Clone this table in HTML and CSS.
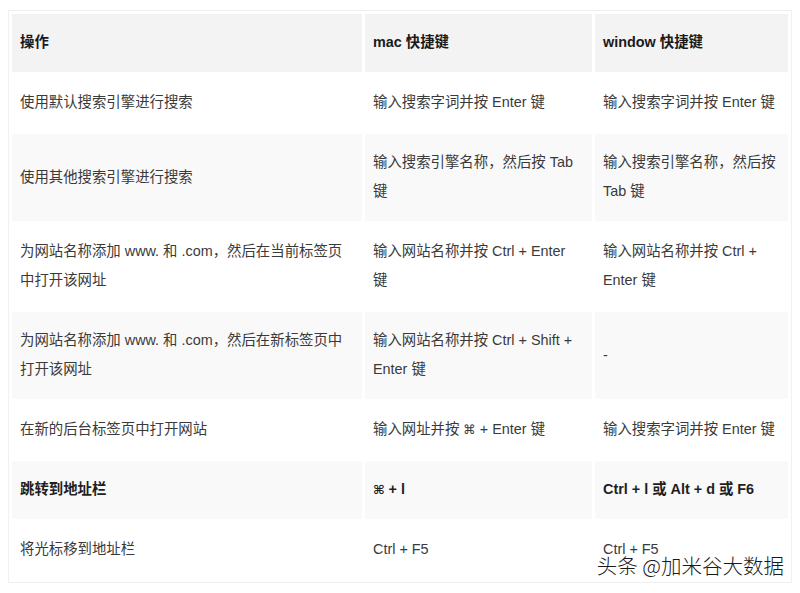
FILE: index.html
```html
<!DOCTYPE html>
<html lang="zh-CN">
<head>
<meta charset="utf-8">
<title>快捷键</title>
<link rel="stylesheet" href="styles.css">
</head>
<body>
<div class="page">
  <table class="keys">
    <colgroup>
      <col class="c1"><col class="c2"><col class="c3">
    </colgroup>
    <thead>
      <tr><th>操作</th><th>mac 快捷键</th><th>window 快捷键</th></tr>
    </thead>
    <tbody>
      <tr><td>使用默认搜索引擎进行搜索</td><td>输入搜索字词并按 Enter 键</td><td>输入搜索字词并按 Enter 键</td></tr>
      <tr><td>使用其他搜索引擎进行搜索</td><td>输入搜索引擎名称，然后按 Tab 键</td><td>输入搜索引擎名称，然后按 Tab 键</td></tr>
      <tr><td>为网站名称添加 www. 和 .com，然后在当前标签页中打开该网址</td><td>输入网站名称并按 Ctrl + Enter 键</td><td>输入网站名称并按 Ctrl + Enter 键</td></tr>
      <tr><td>为网站名称添加 www. 和 .com，然后在新标签页中打开该网址</td><td>输入网站名称并按 Ctrl + Shift + Enter 键</td><td>-</td></tr>
      <tr><td>在新的后台标签页中打开网站</td><td>输入网址并按 <span class="cmd">⌘</span> + Enter 键</td><td>输入搜索字词并按 Enter 键</td></tr>
      <tr class="strong"><td>跳转到地址栏</td><td><span class="cmd">⌘</span> + l</td><td>Ctrl + l 或 Alt + d 或 F6</td></tr>
      <tr><td>将光标移到地址栏</td><td>Ctrl + F5</td><td>Ctrl + F5</td></tr>
    </tbody>
  </table>
  <div class="watermark">头条 @加米谷大数据</div>
</div>
</body>
</html>
```

FILE: styles.css
```css
html, body {
  margin: 0;
  padding: 0;
  background: #ffffff;
}
body {
  padding: 10px 8px 0 8px;
  font-family: "Liberation Sans", "Noto Sans CJK SC", sans-serif;
  font-size: 14.4px;
  color: #3a3a3a;
}
.page {
  position: relative;
  width: 784px;
}
.keys {
  width: 784px;
  table-layout: fixed;
  border: 1px solid #f0f0f0;
  border-collapse: separate;
  border-spacing: 3px 2px;
  padding: 1px 0;
}
.c1 { width: 350px; }
.c2 { width: 227px; }
.c3 { width: 193px; }
.keys th,
.keys td {
  text-align: left;
  vertical-align: middle;
  padding: 14px 8px 15px 8px;
  line-height: 29px;
}
.keys td:nth-child(2) {
  padding-right: 14px;
}
.keys th {
  background: #f3f3f3;
  font-weight: bold;
  color: #1a1a1a;
}
.keys tbody tr:nth-child(even) td {
  background: #f9f9f9;
}
.keys tr.strong td {
  font-weight: bold;
  color: #1f1f1f;
}
.cmd {
  font-family: "DejaVu Sans", sans-serif;
  font-size: 12.5px;
  line-height: 1;
}
.watermark {
  position: absolute;
  right: 8px;
  bottom: 3px;
  font-family: "Noto Sans CJK SC", sans-serif;
  font-size: 20.5px;
  font-weight: 300;
  color: #1a1a1a;
  text-shadow: 0 0 2px #ffffff, 0 0 2px #ffffff;
}
```
